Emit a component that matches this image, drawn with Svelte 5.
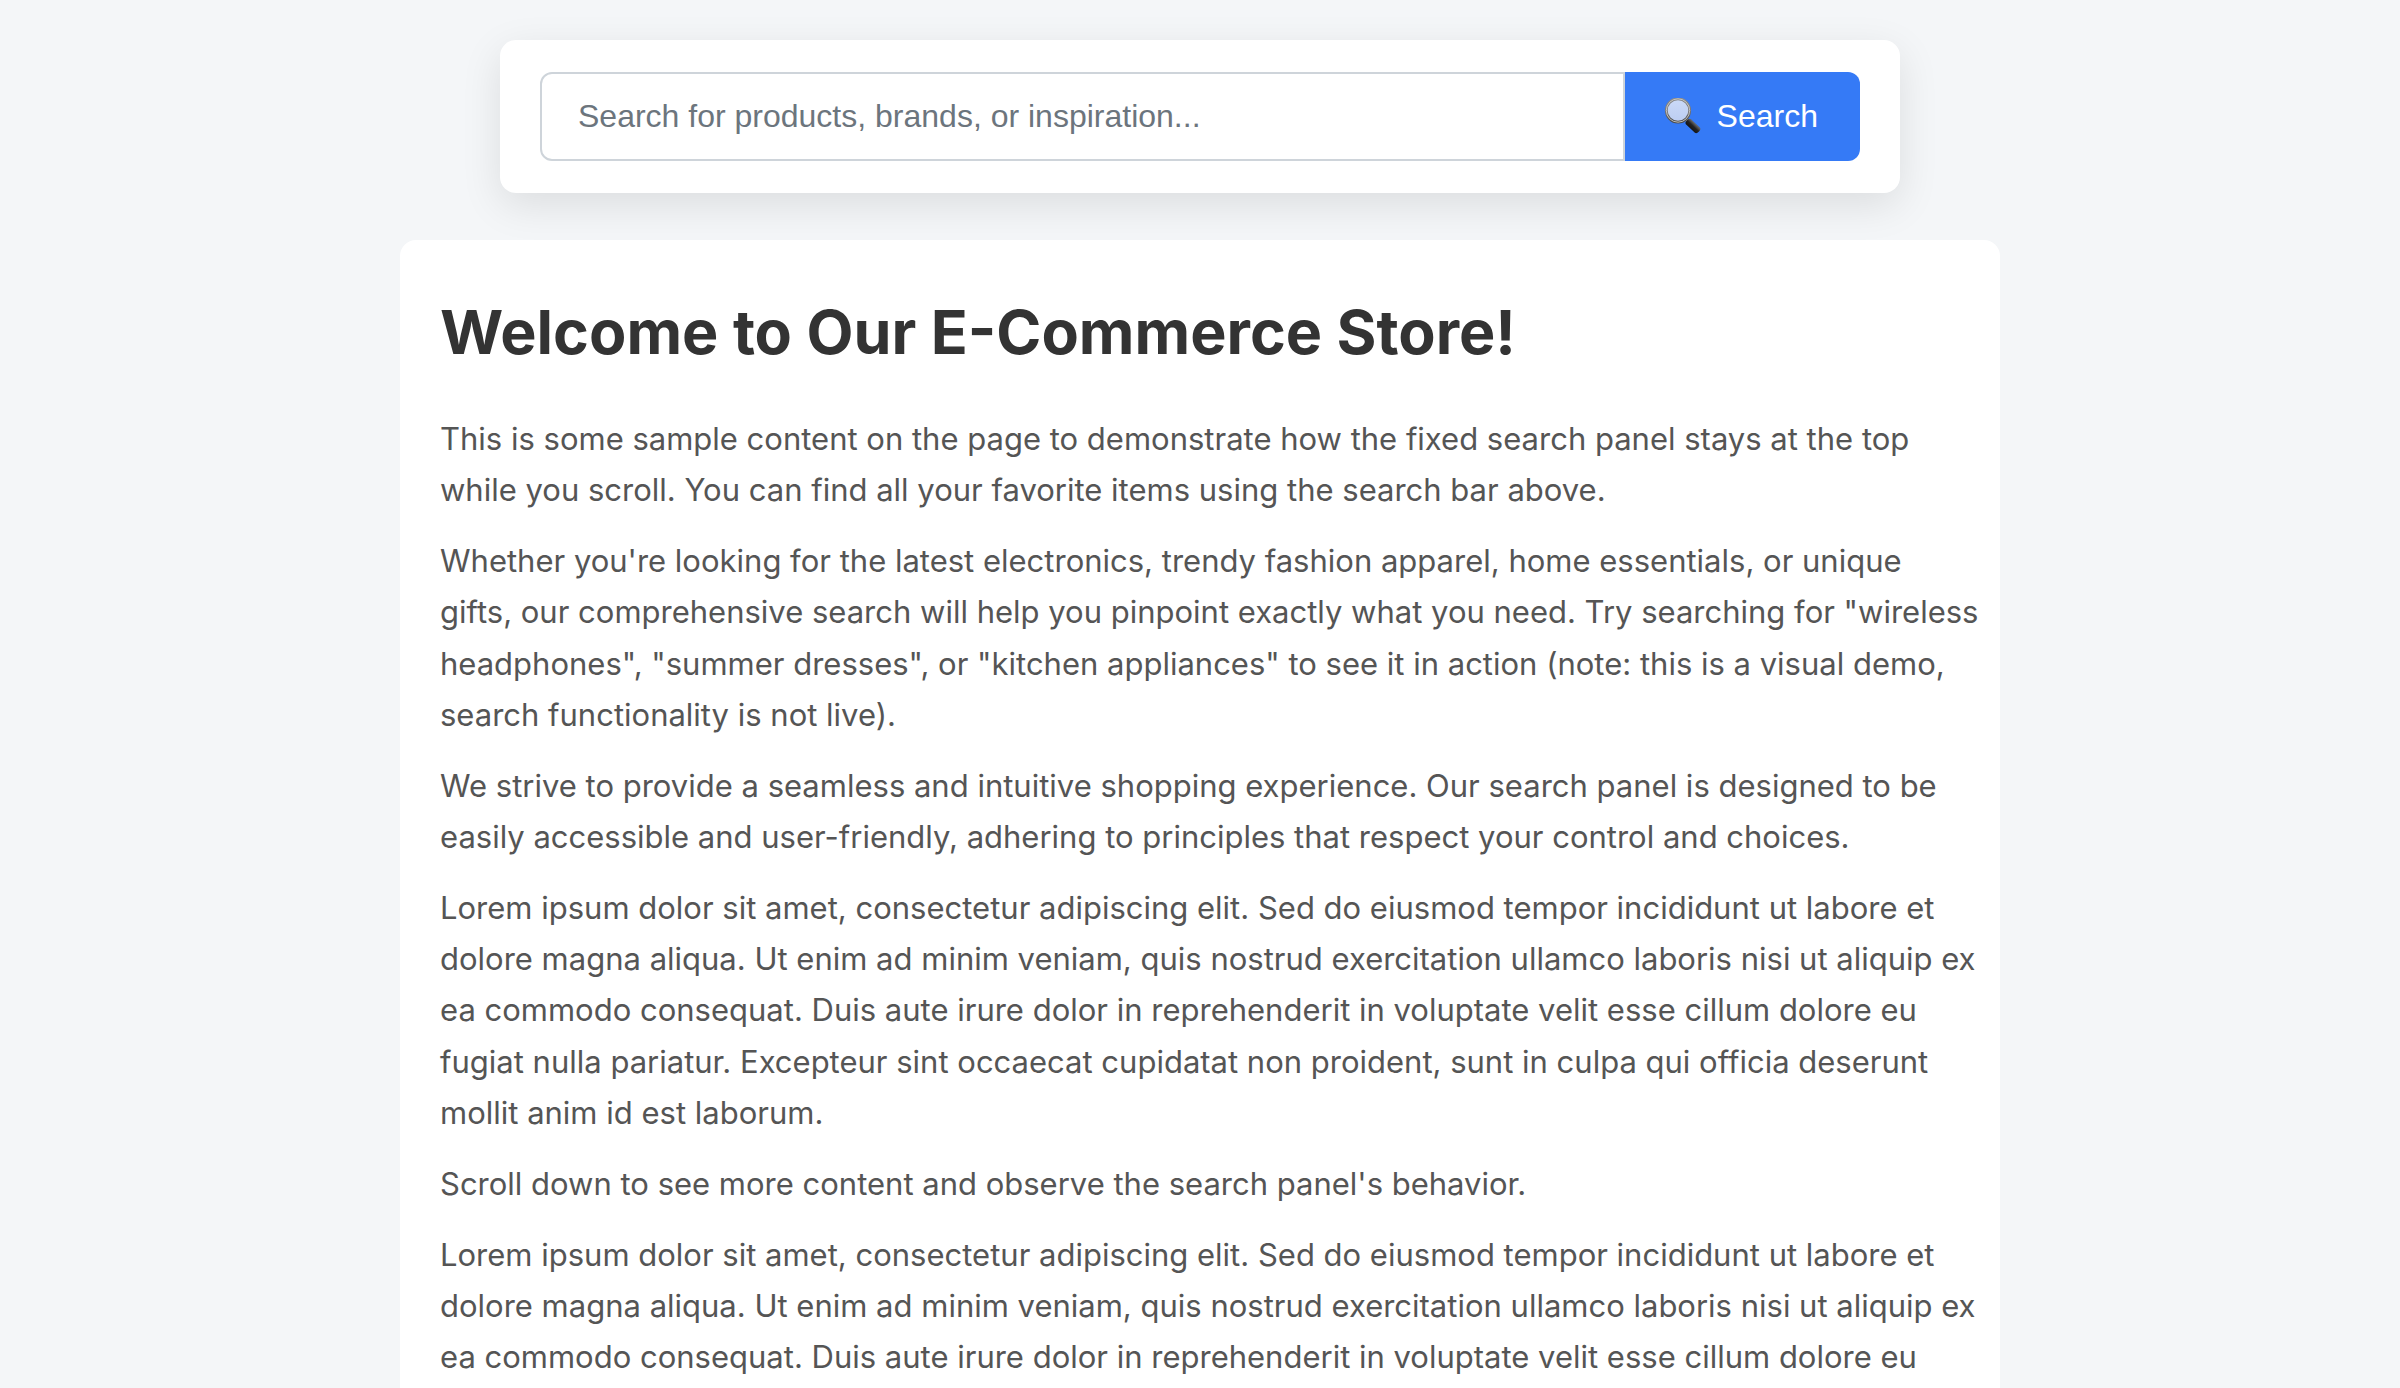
<script>
  const lorem =
    'Lorem ipsum dolor sit amet, consectetur adipiscing elit. Sed do eiusmod tempor incididunt ut labore et dolore magna aliqua. Ut enim ad minim veniam, quis nostrud exercitation ullamco laboris nisi ut aliquip ex ea commodo consequat. Duis aute irure dolor in reprehenderit in voluptate velit esse cillum dolore eu fugiat nulla pariatur. Excepteur sint occaecat cupidatat non proident, sunt in culpa qui officia deserunt mollit anim id est laborum.';

  const paragraphs = [
    'This is some sample content on the page to demonstrate how the fixed search panel stays at the top while you scroll. You can find all your favorite items using the search bar above.',
    'Whether you\'re looking for the latest electronics, trendy fashion apparel, home essentials, or unique\ngifts, our comprehensive search will help you pinpoint exactly what you need. Try searching for "wireless headphones", "summer dresses", or "kitchen appliances" to see it in action (note: this is a visual demo, search functionality is not live).',
    'We strive to provide a seamless and intuitive shopping experience. Our search panel is designed to be easily accessible and user-friendly, adhering to principles that respect your control and choices.',
    lorem,
    "Scroll down to see more content and observe the search panel's behavior.",
    lorem
  ];

  let query = $state('');
</script>

<div class="page">
  <form class="panel" role="search" onsubmit={(e) => e.preventDefault()}>
    <input
      class="field"
      type="text"
      aria-label="Search"
      placeholder="Search for products, brands, or inspiration..."
      bind:value={query}
    />
    <button class="submit" type="submit">
      <svg class="icon" viewBox="0 1.5 38 38" aria-hidden="true">
        <defs>
          <linearGradient id="rim" x1="0" y1="0" x2="0" y2="1">
            <stop offset="0" stop-color="#8b8b8b" />
            <stop offset="0.5" stop-color="#77777a" />
            <stop offset="1" stop-color="#4b4b4b" />
          </linearGradient>
          <linearGradient id="glass" x1="0" y1="0" x2="0" y2="1">
            <stop offset="0" stop-color="#cbdaf8" />
            <stop offset="1" stop-color="#bccdf1" />
          </linearGradient>
          <linearGradient id="grip" x1="0" y1="1" x2="1" y2="0">
            <stop offset="0.2" stop-color="#0b0b0b" />
            <stop offset="0.5" stop-color="#222" />
            <stop offset="0.65" stop-color="#666" />
            <stop offset="0.85" stop-color="#151515" />
          </linearGradient>
        </defs>
        <path d="M21.5 22.5L25 26" stroke="#a9a9a9" stroke-width="3" />
        <path
          d="M21.6 27.4Q20.8 25.6 22.9 23.7Q24.9 21.6 26.7 22.6L36 31.2Q37.2 32.7 35 35Q32.6 37.5 30.9 36.2Z"
          fill="url(#grip)"
        />
        <circle cx="14" cy="14" r="11.7" fill="url(#glass)" stroke="url(#rim)" stroke-width="2.8" />
        <circle cx="14" cy="14" r="11.7" fill="none" stroke="#d6d6d2" stroke-width="0.8" />
      </svg>
      <span>Search</span>
    </button>
  </form>

  <main class="content">
    <h1>Welcome to Our E-Commerce Store!</h1>
    {#each paragraphs as text}
      <p>{text}</p>
    {/each}
  </main>
</div>

<style>
  :global(body) {
    margin: 0;
    background: #f4f6f8;
  }

  .page {
    display: flex;
    flex-direction: column;
    align-items: center;
    gap: 47px;
    padding: 40px 40px 0;
    font-family: Inter, 'Liberation Sans', sans-serif;
  }

  .panel {
    position: sticky;
    top: 40px;
    z-index: 1;
    display: flex;
    box-sizing: border-box;
    width: 100%;
    max-width: 1400px;
    padding: 32px 40px;
    border-radius: 16px;
    background: #fff;
    box-shadow: 0 12px 40px rgba(0, 0, 0, 0.1);
  }

  .field,
  .submit {
    box-sizing: border-box;
    height: 89px;
    margin: 0;
    font-family: 'Liberation Sans', Arial, sans-serif;
    font-size: 32px;
  }

  .field {
    flex: 1;
    min-width: 0;
    padding: 0 36px;
    border: 2px solid #ced4da;
    border-radius: 12px 0 0 12px;
    background: #fff;
    color: #333;
    outline: none;
  }

  .field::placeholder {
    color: #6c757d;
    opacity: 1;
  }

  .submit {
    display: flex;
    align-items: center;
    gap: 15px;
    padding: 0 42px 0 39px;
    border: 0;
    border-radius: 0 12px 12px 0;
    background: #357af6;
    color: #fff;
    cursor: pointer;
  }

  .icon {
    width: 38px;
    height: 38px;
  }

  .content {
    box-sizing: border-box;
    width: 100%;
    max-width: 1600px;
    padding: 40px 16px 40px 40px;
    border-radius: 16px;
    background: #fff;
    color: #555;
    font-size: 31px;
    line-height: 1.65;
  }

  h1 {
    margin: 0 0 29px;
    color: #333;
    font-size: 61px;
    font-weight: 700;
    line-height: 104px;
  }

  p {
    margin: 0 0 20px;
    white-space: pre-line;
  }
</style>
